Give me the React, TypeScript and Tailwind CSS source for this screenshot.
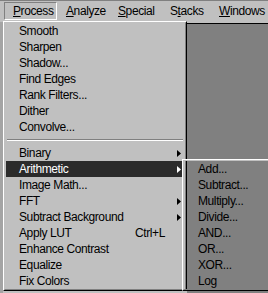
import React from "react";

const font = { fontFamily: '"Liberation Sans", Arial, sans-serif' };

type Item = { label: string; sub?: boolean; key?: string; active?: boolean };

const groupA: Item[] = [
  { label: "Smooth" },
  { label: "Sharpen" },
  { label: "Shadow..." },
  { label: "Find Edges" },
  { label: "Rank Filters..." },
  { label: "Dither" },
  { label: "Convolve..." },
];

const groupB: Item[] = [
  { label: "Binary", sub: true },
  { label: "Arithmetic", sub: true, active: true },
  { label: "Image Math..." },
  { label: "FFT", sub: true },
  { label: "Subtract Background", sub: true },
  { label: "Apply LUT", key: "Ctrl+L" },
  { label: "Enhance Contrast" },
  { label: "Equalize" },
  { label: "Fix Colors" },
];

const subItems = ["Add...", "Subtract...", "Multiply...", "Divide...", "AND...", "OR...", "XOR...", "Log"];

function Arrow({ white }: { white?: boolean }) {
  return (
    <svg width="4" height="7" viewBox="0 0 4 7" className="absolute right-[3px] top-[5px]">
      <path d="M0 0 L4 3.5 L0 7 Z" fill={white ? "#fff" : "#000"} />
    </svg>
  );
}

function Row({ item }: { item: Item }) {
  return (
    <div
      className={`relative h-4 flex items-center pl-[13px] ${
        item.active ? "bg-[#2b2b2b] text-white" : "text-black"
      }`}
    >
      <span>{item.label}</span>
      {item.key && <span className="absolute left-[129px]">{item.key}</span>}
      {item.sub && <Arrow white={item.active} />}
    </div>
  );
}

function MenuTitle({ children, pressed, w }: { children: React.ReactNode; pressed?: boolean; w: string }) {
  return (
    <div
      className={`${w} h-[18px] flex items-center pl-2 border ${
        pressed ? "border-t-[#808080] border-l-[#808080] border-r-white border-b-white" : "border-transparent"
      }`}
    >
      {children}
    </div>
  );
}

export default function App() {
  return (
    <div
      className="relative w-[268px] h-[293px] overflow-hidden bg-[#c0c0c0] text-[12px] tracking-[-0.4px] leading-none"
      style={font}
    >
      {/* menu bar */}
      <div className="h-[21px] border-t border-[#808080] flex items-start pt-[1px] pl-1">
        <MenuTitle pressed w="w-[53px]">
          <span>
            <u className="underline-offset-1">P</u>rocess
          </span>
        </MenuTitle>
        <MenuTitle w="w-[52px]">
          <span>
            <u className="underline-offset-1">A</u>nalyze
          </span>
        </MenuTitle>
        <MenuTitle w="w-[52px]">
          <span>
            <u className="underline-offset-1">S</u>pecial
          </span>
        </MenuTitle>
        <MenuTitle w="w-[49px]">
          <span>
            S<u className="underline-offset-1">t</u>acks
          </span>
        </MenuTitle>
        <MenuTitle w="w-[58px]">
          <span>
            <u className="underline-offset-1">W</u>indows
          </span>
        </MenuTitle>
      </div>

      <div className="flex h-[272px]">
        <div className="w-[3px] mt-[1px] bg-[#a4a4a4]" />
        {/* Process dropdown */}
        <div className="w-[184px] self-start border border-t-white border-l-white border-r-black border-b-black">
          <div className="border border-t-[#c0c0c0] border-l-[#c0c0c0] border-r-[#808080] border-b-[#808080] px-[1px]">
            {groupA.map((it) => (
              <Row key={it.label} item={it} />
            ))}
            <div className="h-[10px] pt-1">
              <div className="mx-[1px] border-t border-t-[#808080] border-b border-b-white" />
            </div>
            {groupB.map((it) => (
              <Row key={it.label} item={it} />
            ))}
          </div>
        </div>
        <div className="flex-1 pt-[2px]">
          <div className="h-full bg-[#808080] border-t border-black" />
        </div>
      </div>

      {/* Arithmetic submenu */}
      <div className="absolute left-[182px] top-[159px] w-[100px] border border-t-white border-l-white border-r-black border-b-black">
        <div className="border border-t-[#c0c0c0] border-l-[#c0c0c0] border-r-[#808080] border-b-[#808080] px-[1px]">
          {subItems.map((s) => (
            <div key={s} className="h-4 flex items-center pl-[13px] text-black">
              {s}
            </div>
          ))}
        </div>
      </div>
    </div>
  );
}
